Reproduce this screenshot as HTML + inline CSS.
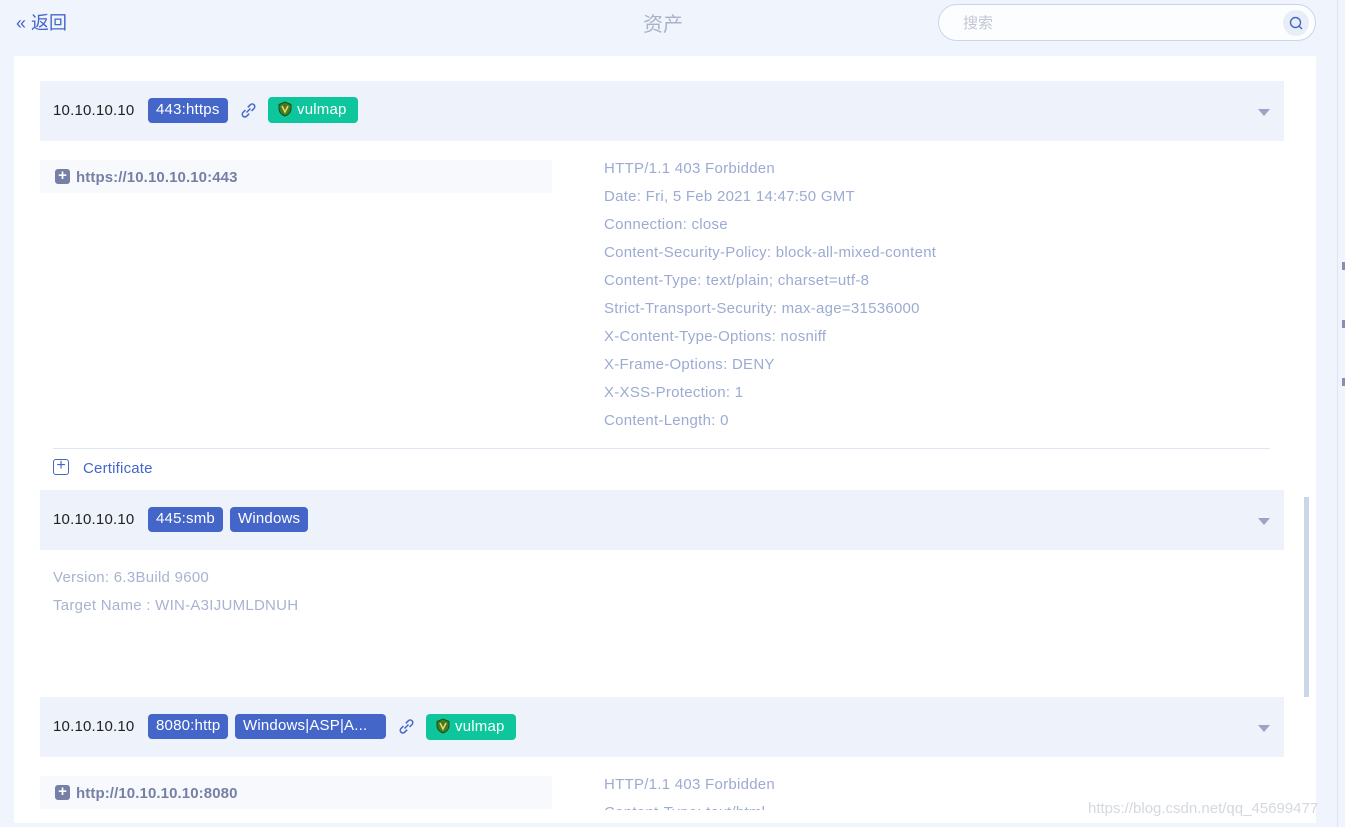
<!DOCTYPE html>
<html><head><meta charset="utf-8"><style>
*{margin:0;padding:0;box-sizing:border-box}
body{width:1345px;height:827px;background:#f0f5fd;font-family:"Liberation Sans","Noto Sans CJK SC",sans-serif;position:relative;overflow:hidden}
.a{position:absolute;white-space:nowrap}
.panel{left:14px;top:56px;width:1302px;height:767px;background:#fff}
.row{left:40px;width:1244px;height:60px;background:#eef2fb}
.ip{font-size:15px;color:#222;letter-spacing:0.2px}
.tag{height:25px;line-height:23px;padding:0 8px;border-radius:4px;background:#4466c9;color:#fff;font-size:15px;letter-spacing:0.2px}
.vm{height:26px;line-height:26px;padding:0 11px 0 10px;border-radius:4px;background:#0ec69c;color:#fff;font-size:15px;letter-spacing:0.2px}
.vm svg{vertical-align:-3px;margin-right:5px}
.caret{width:0;height:0;border-left:6px solid transparent;border-right:6px solid transparent;border-top:7px solid #9aa4c6}
.url{left:40px;width:512px;height:33px;background:#f8f9fc}
.url span{position:absolute;left:36px;top:9px;font-size:15px;font-weight:bold;color:#7680a6;letter-spacing:0.1px}
.plus{position:absolute;left:15px;top:9px;width:15px;height:15px;border-radius:3px;background:#7680a6;color:#fff;font-size:15px;line-height:14px;text-align:center;font-weight:bold}
.h{left:604px;font-size:15px;color:#9cabd2;letter-spacing:0.27px}
.g{left:53px;font-size:15px;color:#a7b3d0;letter-spacing:0.27px}
</style></head><body>
<div class="a" style="left:16px;top:9px;font-size:18px;color:#4466c9">« 返回</div>
<div class="a" style="left:643px;top:8px;font-size:20px;color:#a9b2c8">资产</div>
<div class="a" style="left:938px;top:4px;width:378px;height:37px;border:1px solid #c9d6ea;border-radius:19px;background:#fbfdff"></div>
<div class="a" style="left:963px;top:12px;font-size:15px;color:#c2c6d0">搜索</div>
<div class="a" style="left:1283px;top:10px;width:26px;height:26px;border-radius:13px;background:#e8eef8"></div>
<svg class="a" style="left:1288px;top:15px" width="16" height="16"><circle cx="7.5" cy="7.5" r="5" fill="none" stroke="#4466c9" stroke-width="1.4"/><path d="M11 11l3 3" stroke="#4466c9" stroke-width="1.4"/></svg>
<div class="a" style="left:1337px;top:0;width:1px;height:827px;background:#dde4f0"></div>
<div class="a" style="left:1342px;top:262px;width:3px;height:8px;background:#8a8fb0"></div>
<div class="a" style="left:1342px;top:320px;width:3px;height:8px;background:#8a8fb0"></div>
<div class="a" style="left:1342px;top:378px;width:3px;height:8px;background:#8a8fb0"></div>
<div class="a panel"></div>
<div class="a" style="left:1304px;top:497px;width:5px;height:200px;background:#cbd7e6"></div>

<div class="a row" style="top:81px"></div>
<div class="a ip" style="left:53px;top:102px">10.10.10.10</div>
<div class="a tag" style="left:148px;top:98px">443:https</div>
<svg class="a" style="left:239px;top:101px" width="19" height="19" fill="none" stroke="#4466c9" stroke-width="1.5"><path d="M7.5 11.5l4-4M6.5 9l-2.5 2.5a2.6 2.6 0 0 0 3.7 3.7l2.5-2.5M12.5 10l2.5-2.5a2.6 2.6 0 0 0-3.7-3.7L8.8 6.3"/></svg>
<div class="a vm" style="left:268px;top:97px"><svg width="14" height="16" viewBox="0 0 14 16"><path d="M7 1l6 2.5v4c0 4-3 6.5-6 7.5C4 14 1 11.5 1 7.5v-4z" fill="#3c7d2a" stroke="#1d4d12"/><path d="M4 5l3 6 3-6" fill="none" stroke="#f1d35a" stroke-width="1.6"/></svg>vulmap</div>
<div class="a caret" style="left:1258px;top:109px"></div>

<div class="a url" style="top:160px"><div class="plus">+</div><span>https://10.10.10.10:443</span></div>
<div class="a h" style="top:160px">HTTP/1.1 403 Forbidden</div>
<div class="a h" style="top:188px">Date: Fri, 5 Feb 2021 14:47:50 GMT</div>
<div class="a h" style="top:216px">Connection: close</div>
<div class="a h" style="top:244px">Content-Security-Policy: block-all-mixed-content</div>
<div class="a h" style="top:272px">Content-Type: text/plain; charset=utf-8</div>
<div class="a h" style="top:300px">Strict-Transport-Security: max-age=31536000</div>
<div class="a h" style="top:328px">X-Content-Type-Options: nosniff</div>
<div class="a h" style="top:356px">X-Frame-Options: DENY</div>
<div class="a h" style="top:384px">X-XSS-Protection: 1</div>
<div class="a h" style="top:412px">Content-Length: 0</div>
<div class="a" style="left:53px;top:448px;width:1217px;height:1px;background:#dfe6f3"></div>
<div class="a" style="left:53px;top:459px;width:16px;height:16px;border:1.5px solid #4466c9;border-radius:3px;color:#4466c9;font-size:16px;line-height:12px;text-align:center">+</div>
<div class="a" style="left:83px;top:460px;font-size:15px;color:#4466c9;letter-spacing:0.2px">Certificate</div>

<div class="a row" style="top:490px"></div>
<div class="a ip" style="left:53px;top:511px">10.10.10.10</div>
<div class="a tag" style="left:148px;top:507px">445:smb</div>
<div class="a tag" style="left:230px;top:507px">Windows</div>
<div class="a caret" style="left:1258px;top:518px"></div>
<div class="a g" style="top:569px">Version: 6.3Build 9600</div>
<div class="a g" style="top:597px">Target Name : WIN-A3IJUMLDNUH</div>

<div class="a row" style="top:697px"></div>
<div class="a ip" style="left:53px;top:718px">10.10.10.10</div>
<div class="a tag" style="left:148px;top:714px">8080:http</div>
<div class="a tag" style="left:235px;top:714px;width:151px">Windows|ASP|A...</div>
<svg class="a" style="left:397px;top:717px" width="19" height="19" fill="none" stroke="#4466c9" stroke-width="1.5"><path d="M7.5 11.5l4-4M6.5 9l-2.5 2.5a2.6 2.6 0 0 0 3.7 3.7l2.5-2.5M12.5 10l2.5-2.5a2.6 2.6 0 0 0-3.7-3.7L8.8 6.3"/></svg>
<div class="a vm" style="left:426px;top:714px"><svg width="14" height="16" viewBox="0 0 14 16"><path d="M7 1l6 2.5v4c0 4-3 6.5-6 7.5C4 14 1 11.5 1 7.5v-4z" fill="#3c7d2a" stroke="#1d4d12"/><path d="M4 5l3 6 3-6" fill="none" stroke="#f1d35a" stroke-width="1.6"/></svg>vulmap</div>
<div class="a caret" style="left:1258px;top:725px"></div>
<div class="a url" style="top:776px"><div class="plus">+</div><span>http://10.10.10.10:8080</span></div>
<div class="a h" style="top:776px">HTTP/1.1 403 Forbidden</div>
<div class="a h" style="top:804px;height:6px;overflow:hidden">Content-Type: text/html</div>
<div class="a" style="left:1088px;top:800px;font-size:15px;color:#d4d8e0">https://blog.csdn.net/qq_45699477</div>
</body></html>
